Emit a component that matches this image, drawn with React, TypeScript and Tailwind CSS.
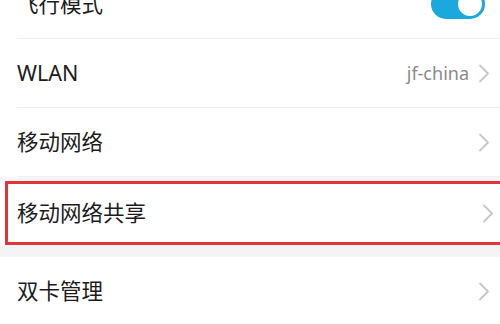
import React from 'react';

const Chevron = () => (
  <svg width="12" height="19" viewBox="0 0 12 19" fill="none" className="shrink-0">
    <polyline points="2,1.5 10,9.5 2,17.5" stroke="#c6c6c6" strokeWidth="1.8" strokeLinecap="round" strokeLinejoin="round" />
  </svg>
);

const Toggle = () => (
  <div className="w-[54px] h-[30px] rounded-full bg-[#1ba8dc] flex items-center justify-end pr-[1px]">
    <div className="w-[28px] h-[28px] rounded-full bg-white border-2 border-[#1ba8dc]" />
  </div>
);

interface RowProps {
  label: string;
  value?: string;
  toggle?: boolean;
  divider?: boolean;
}

const Row: React.FC<RowProps> = ({ label, value, toggle, divider = true }) => (
  <div className="pl-[17px] bg-white">
    <div className={`h-[69px] flex items-center justify-between pr-[10px] ${divider ? 'border-b border-[#efefef]' : ''}`}>
      <span className="text-[21.5px] text-[#1c1c1c]">{label}</span>
      <div className="flex items-center gap-[9px]">
        {value && <span className="text-[18px] text-[#8a8a8a]">{value}</span>}
        {toggle ? <div className="mr-[5px]"><Toggle /></div> : <Chevron />}
      </div>
    </div>
  </div>
);

export default function App() {
  return (
    <div
      className="w-[500px] h-[324px] overflow-hidden bg-white"
      style={{ fontFamily: '"Noto Sans", "Noto Sans CJK SC", sans-serif' }}
    >
      <div className="-mt-[30px]">
        <Row label="飞行模式" toggle />
        <Row label="WLAN" value="jf-china" />
        <Row label="移动网络" />
        <div className="h-[4px] bg-[#f6f6f8]" />
        {/* highlighted row */}
        <div className="ml-[5px] -mr-[4px] border-[3px] border-[#e3343a]">
          <div className="h-[58px] flex items-center justify-between pl-[9px] pr-[7px] bg-white">
            <span className="text-[21.5px] text-[#1c1c1c]">移动网络共享</span>
            <Chevron />
          </div>
        </div>
        <div className="h-[12px] bg-[#f4f4f6]" />
        <Row label="双卡管理" />
      </div>
    </div>
  );
}
